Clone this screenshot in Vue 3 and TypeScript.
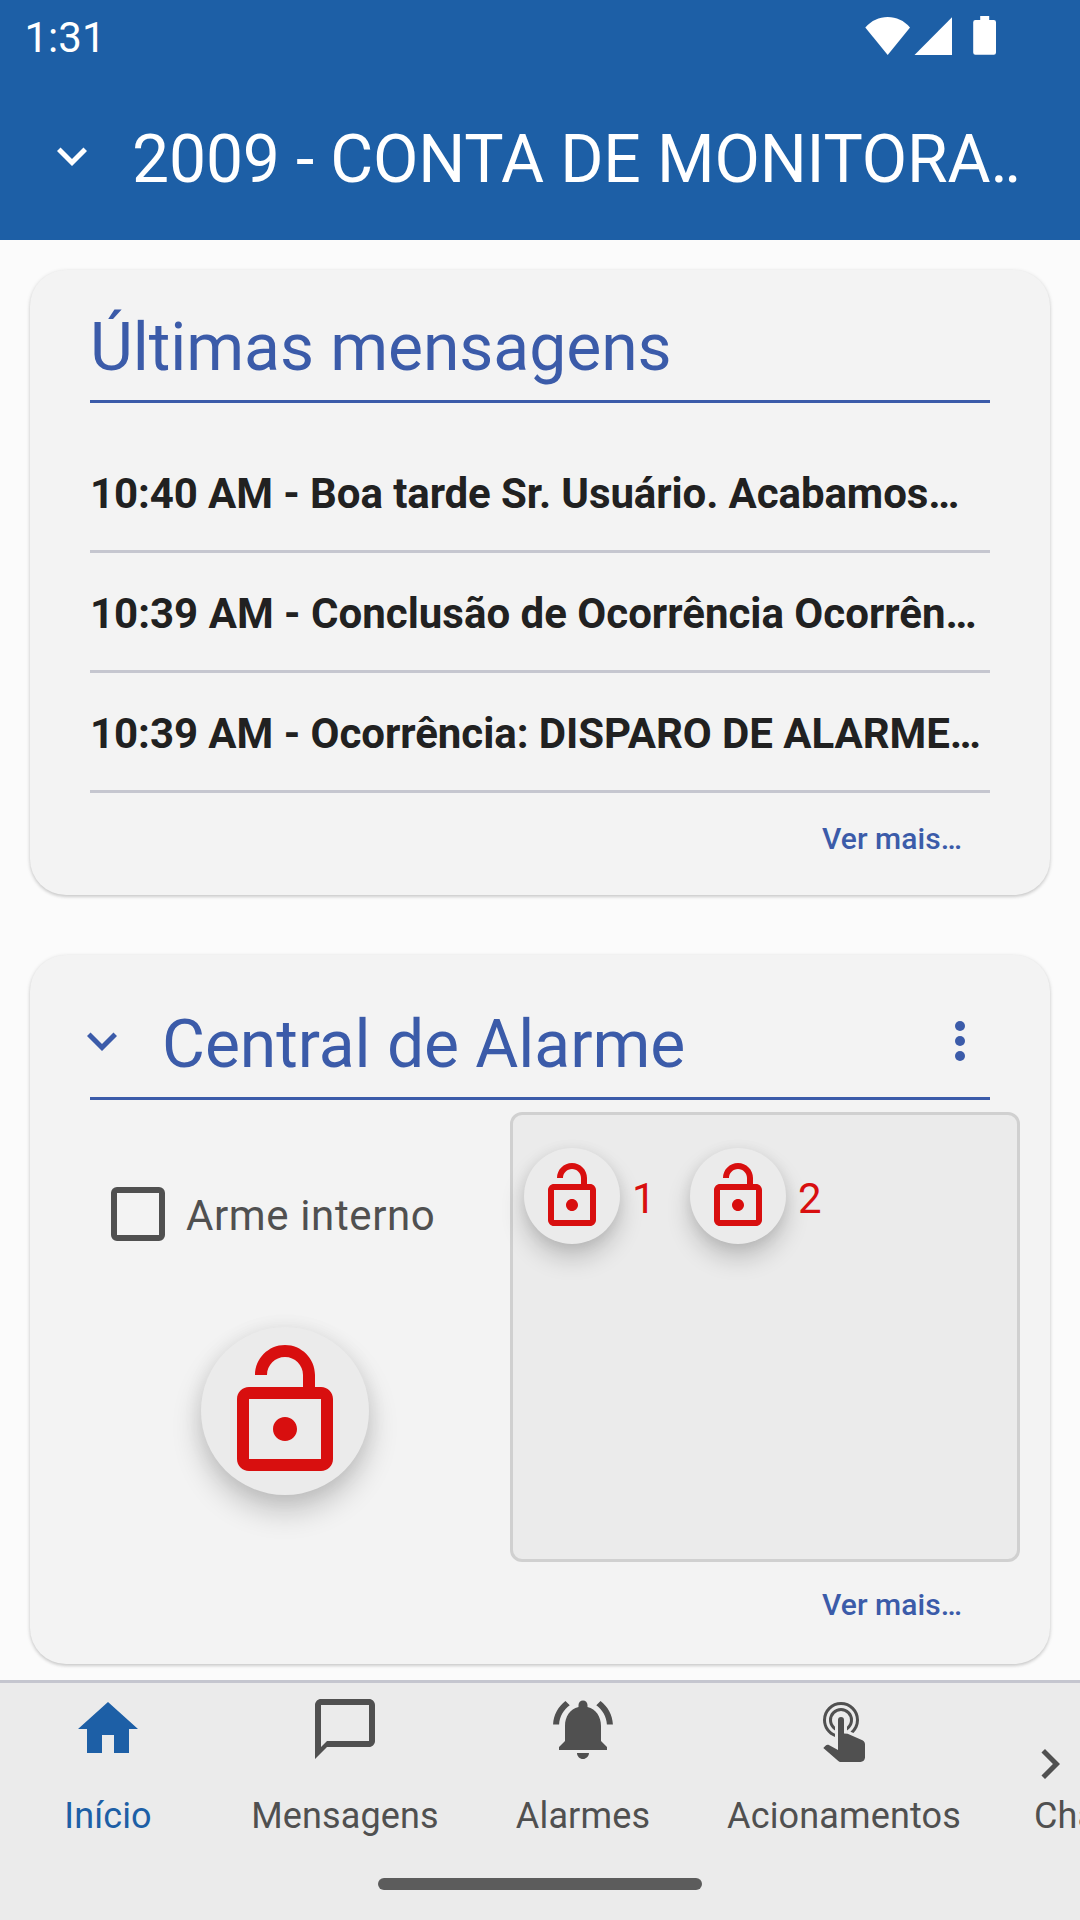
<script setup lang="ts">
interface Zone {
  id: number
}
interface NavItem {
  key: string
  label: string
  icon: string
  active?: boolean
}

const account = '2009 - CONTA DE MONITORA'

const messages: string[] = [
  '10:40 AM - Boa tarde Sr. Usuário. Acabamos…',
  '10:39 AM - Conclusão de Ocorrência Ocorrên…',
  '10:39 AM - Ocorrência: DISPARO DE ALARME…',
]

const zones: Zone[] = [{ id: 1 }, { id: 2 }]

const chevronDown = 'M16.59 8.59L12 13.17 7.41 8.59 6 10l6 6 6-6z'
const lockOpen =
  'M12 17c1.1 0 2-.9 2-2s-.9-2-2-2-2 .9-2 2 .9 2 2 2zm6-9h-1V6c0-2.76-2.24-5-5-5S7 3.24 7 6h2c0-1.66 1.34-3 3-3s3 1.34 3 3v2H6c-1.1 0-2 .9-2 2v10c0 1.1.9 2 2 2h12c1.1 0 2-.9 2-2V10c0-1.1-.9-2-2-2zm0 12H6V10h12v10z'

const navItems: NavItem[] = [
  { key: 'home', label: 'Início', active: true, icon: 'M10 20v-6h4v6h5v-8h3L12 3 2 12h3v8z' },
  {
    key: 'messages',
    label: 'Mensagens',
    icon: 'M20 2H4c-1.1 0-2 .9-2 2v18l4-4h14c1.1 0 2-.9 2-2V4c0-1.1-.9-2-2-2zm0 14H6l-2 2V4h16v12z',
  },
  {
    key: 'alarms',
    label: 'Alarmes',
    icon: 'M7.58 4.08L6.15 2.65C3.75 4.48 2.17 7.3 2.03 10.5h2c.15-2.65 1.51-4.97 3.55-6.42zm12.39 6.42h2c-.15-3.2-1.73-6.02-4.12-7.85l-1.42 1.43c2.02 1.45 3.39 3.77 3.54 6.42zM18 11c0-3.07-1.64-5.64-4.5-6.32V4c0-.83-.67-1.5-1.5-1.5s-1.5.67-1.5 1.5v.68C7.63 5.36 6 7.92 6 11v5l-2 2v1h16v-1l-2-2v-5zm-6 11c.14 0 .27-.01.4-.04.65-.14 1.18-.58 1.44-1.18.1-.24.15-.5.15-.78h-4c.01 1.1.9 2 2.01 2z',
  },
  {
    key: 'triggers',
    label: 'Acionamentos',
    icon: 'M10,9A1,1 0 0,1 11,8A1,1 0 0,1 12,9V13.47L13.21,13.6L18.15,15.79C18.68,16.03 19,16.56 19,17.14V21.5C18.97,22.32 18.32,22.97 17.5,23H11C10.62,23 10.26,22.85 10,22.57L5.1,18.37L5.84,17.6C6.03,17.39 6.3,17.28 6.58,17.28H6.8L10,19V9M11,5A4,4 0 0,1 15,9C15,10.5 14.2,11.77 13,12.46V11.24C13.61,10.69 14,9.89 14,9A3,3 0 0,0 11,6A3,3 0 0,0 8,9C8,9.89 8.39,10.69 9,11.24V12.46C7.8,11.77 7,10.5 7,9A4,4 0 0,1 11,5M11,3A6,6 0 0,1 17,9C17,10.7 16.29,12.23 15.16,13.33L14.16,12.88C15.28,11.96 16,10.56 16,9A5,5 0 0,0 11,4A5,5 0 0,0 6,9C6,11.05 7.23,12.81 9,13.58V14.66C6.67,13.83 5,11.61 5,9A6,6 0 0,1 11,3Z',
  },
  { key: 'calls', label: 'Cha', icon: '' },
]
</script>

<template>
  <div class="screen">
    <header class="top">
      <div class="status">
        <span class="clock">1:31</span>
        <svg class="status-icons" viewBox="0 0 132 40" aria-hidden="true">
          <path d="M0.3 11.4C6.5 4.6 14 1 22.7 1S39 4.6 45 11.4L22.7 39z" />
          <path d="M49.5 39L87 1.2V39z" />
          <path d="M115.2 0h9v4h4.6a2.2 2.2 0 0 1 2.2 2.2V36.6a2.2 2.2 0 0 1-2.2 2.2h-18.4a2.2 2.2 0 0 1-2.2-2.2V6.2a2.2 2.2 0 0 1 2.2-2.2h4.8z" />
        </svg>
      </div>
      <div class="account">
        <svg class="i60" viewBox="0 0 24 24"><path :d="chevronDown" /></svg>
        <h1>{{ account }}<span class="dots">..</span></h1>
      </div>
    </header>

    <main>
      <section class="card messages">
        <h2>Últimas mensagens</h2>
        <ul>
          <li v-for="message in messages" :key="message">{{ message }}</li>
        </ul>
        <a class="more">Ver mais…</a>
      </section>

      <section class="card alarm">
        <div class="alarm-head">
          <svg class="i60" viewBox="0 0 24 24"><path :d="chevronDown" /></svg>
          <h2>Central de Alarme</h2>
          <svg class="i60 menu" viewBox="0 0 24 24">
            <circle cx="12" cy="6" r="2" />
            <circle cx="12" cy="12" r="2" />
            <circle cx="12" cy="18" r="2" />
          </svg>
        </div>
        <div class="alarm-body">
          <div class="controls">
            <label class="check"><span class="box"></span><span>Arme interno</span></label>
            <button class="round big" type="button">
              <svg viewBox="0 0 24 24"><path :d="lockOpen" /></svg>
            </button>
          </div>
          <div class="panel">
            <div v-for="zone in zones" :key="zone.id" class="zone">
              <button class="round small" type="button">
                <svg viewBox="0 0 24 24"><path :d="lockOpen" /></svg>
              </button>
              <span>{{ zone.id }}</span>
            </div>
          </div>
        </div>
        <a class="more">Ver mais…</a>
      </section>
    </main>

    <footer>
      <nav>
        <div v-for="item in navItems" :key="item.key" :class="['tab', item.key, { active: item.active }]">
          <svg viewBox="0 0 24 24"><path :d="item.icon" /></svg>
          <span>{{ item.label }}</span>
        </div>
        <svg class="i60 next" viewBox="0 0 24 24">
          <path d="M10 6L8.59 7.41 13.17 12l-4.58 4.59L10 18l6-6z" />
        </svg>
      </nav>
      <div class="gesture"></div>
    </footer>
  </div>
</template>

<style>
body {
  margin: 0;
  background: #fbfbfb;
}
</style>

<style scoped>
.screen {
  width: 1080px;
  height: 1920px;
  display: flex;
  flex-direction: column;
  overflow: hidden;
  background: #fbfbfb;
  color: #212121;
  font-family: Roboto, "Noto Sans", sans-serif;
}
.screen *,
.screen {
  box-sizing: border-box;
}
svg {
  display: block;
  flex: none;
  fill: currentColor;
}
h1,
h2,
ul {
  margin: 0;
  padding: 0;
  font-weight: 400;
}
.i60 {
  width: 60px;
  height: 60px;
}
.top {
  flex: none;
  height: 240px;
  background: #1d5fa6;
  color: #fff;
}
.status {
  height: 72px;
  display: flex;
  justify-content: space-between;
  padding: 16px 83px 0 24.5px;
}
.clock {
  font-size: 42px;
  line-height: 44px;
}
.status-icons {
  width: 132px;
  height: 40px;
}
.account {
  height: 168px;
  display: flex;
  align-items: center;
  padding-left: 42px;
}
h1 {
  margin: 8px 0 0 30px;
  font-size: 66px;
  line-height: 80px;
  letter-spacing: -0.15px;
  white-space: nowrap;
}
.dots {
  letter-spacing: -3.5px;
}
main {
  flex: none;
  height: 1440px;
  padding: 30px 30px 0;
}
.card {
  background: #f3f3f3;
  border-radius: 36px;
  box-shadow: 0 1px 4px rgba(0, 0, 0, 0.14), 0 2px 3px rgba(0, 0, 0, 0.1);
}
.messages {
  height: 625px;
  padding: 0 60px;
}
h2 {
  color: #3b5ba9;
  font-size: 66px;
  line-height: 80px;
  letter-spacing: -0.06px;
  white-space: nowrap;
}
.messages h2 {
  height: 133px;
  padding-top: 38px;
  border-bottom: 3px solid #3b5ba9;
}
ul {
  list-style: none;
  padding-top: 30px;
}
li {
  height: 120px;
  padding-top: 4px;
  border-bottom: 3px solid #c5c6cf;
  font-size: 42px;
  font-weight: 700;
  line-height: 113px;
  white-space: nowrap;
}
li:first-child {
  letter-spacing: -0.09px;
}
li:last-child {
  letter-spacing: -0.05px;
}
.more {
  display: block;
  color: #3b5ba9;
  font-size: 30px;
  font-weight: 500;
  line-height: 40px;
  text-align: right;
  letter-spacing: 0.06px;
}
.messages .more {
  padding: 26px 28px 0 0;
}
.alarm {
  height: 709px;
  margin-top: 60px;
}
.alarm-head {
  height: 145px;
  margin: 0 60px;
  padding: 56px 0 0 0;
  display: flex;
  align-items: flex-start;
  border-bottom: 3px solid #3b5ba9;
  color: #3b5ba9;
}
.alarm-head > .i60:first-child {
  margin-left: -18px;
}
.alarm-head h2 {
  margin: -6px 0 0 30px;
}
.menu {
  margin-left: auto;
}
.alarm-body {
  display: flex;
  height: 462px;
  padding-right: 30px;
}
.controls {
  width: 480px;
  padding: 87px 0 0 81px;
}
.check {
  display: flex;
  align-items: center;
  height: 54px;
  color: #505050;
  font-size: 42px;
  line-height: 54px;
  letter-spacing: 0.62px;
}
.check span:last-child {
  margin: 3px 0 0 21px;
}
.box {
  width: 54px;
  height: 54px;
  border: 6px solid #505050;
  border-radius: 6px;
}
.round {
  display: flex;
  align-items: center;
  justify-content: center;
  flex: none;
  padding: 0;
  border: 0;
  border-radius: 50%;
  background: #ebebeb;
  color: #d80f0f;
}
.big {
  width: 168px;
  height: 168px;
  margin: 86px 0 0 90px;
  box-shadow: 0 16px 30px rgba(0, 0, 0, 0.2), 0 2px 20px rgba(0, 0, 0, 0.07);
}
.big svg {
  width: 144px;
  height: 144px;
}
.small {
  width: 96px;
  height: 96px;
  box-shadow: 0 14px 24px rgba(0, 0, 0, 0.19), 0 2px 14px rgba(0, 0, 0, 0.08);
}
.small svg {
  width: 72px;
  height: 72px;
}
.panel {
  flex: 1;
  display: flex;
  align-items: flex-start;
  height: 450px;
  margin-top: 12px;
  padding: 33px 0 0 11px;
  background: #ebebeb;
  border: 3px solid #d0d0d0;
  border-radius: 12px;
}
.zone {
  width: 166px;
  display: flex;
  align-items: center;
  color: #d80f0f;
  font-size: 42px;
  line-height: 48px;
}
.zone span {
  margin: 6px 0 0 12px;
}
.alarm .more {
  padding: 23px 88px 0 0;
}
footer {
  height: 240px;
  background: #ebebeb;
  border-top: 3px solid #c5c6cf;
  color: #505050;
}
nav {
  position: relative;
  display: flex;
  height: 195px;
  overflow: hidden;
}
.tab {
  flex: none;
  display: flex;
  flex-direction: column;
  align-items: center;
  padding-top: 10px;
  font-size: 36px;
  line-height: 44px;
  letter-spacing: 0.15px;
}
.tab svg {
  width: 72px;
  height: 72px;
}
.tab span {
  margin-top: 29px;
}
.active {
  color: #1d5fa6;
}
.home {
  width: 216px;
}
.messages.tab {
  width: 258px;
  height: auto;
  padding-left: 0;
  padding-right: 0;
}
.alarms {
  width: 218px;
}
.triggers {
  width: 304px;
}
.calls {
  align-items: flex-start;
  padding-left: 38px;
}
.next {
  position: absolute;
  right: 0;
  top: 51px;
}
.gesture {
  width: 324px;
  height: 12px;
  margin: 0 auto;
  border-radius: 6px;
  background: #5c5c5c;
}
</style>
